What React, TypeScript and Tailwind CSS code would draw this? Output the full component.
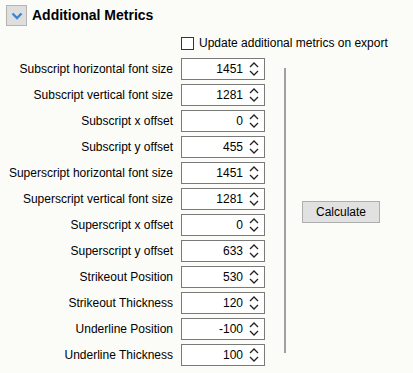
const rows: [string, string][] = [
  ['Subscript horizontal font size', '1451'],
  ['Subscript vertical font size', '1281'],
  ['Subscript x offset', '0'],
  ['Subscript y offset', '455'],
  ['Superscript horizontal font size', '1451'],
  ['Superscript vertical font size', '1281'],
  ['Superscript x offset', '0'],
  ['Superscript y offset', '633'],
  ['Strikeout Position', '530'],
  ['Strikeout Thickness', '120'],
  ['Underline Position', '-100'],
  ['Underline Thickness', '100'],
];

function SpinBox({ value }: { value: string }) {
  return (
    <div className="flex h-[22px] w-[84px] items-center border border-[#7a7a7a] bg-white pr-[3px]">
      <span className="flex-1 text-right text-[12px] text-black">{value}</span>
      <svg width="14" height="16" viewBox="0 0 14 16" className="ml-[4px]">
        <path d="M3 6 L7 2 L11 6" fill="none" stroke="#222" strokeWidth="1.3" />
        <path d="M3 10 L7 14 L11 10" fill="none" stroke="#222" strokeWidth="1.3" />
      </svg>
    </div>
  );
}

export default function App() {
  return (
    <div
      className="h-[373px] w-[413px] bg-[#fbfcf8] text-black"
      style={{ fontFamily: '"Liberation Sans", Arial, sans-serif' }}
    >
      <div className="flex items-center gap-[5px] pl-[6px] pt-[5px]">
        <div className="flex h-[21px] w-[21px] items-center justify-center border border-[#b4b4b4] bg-[#dedede]">
          <svg width="12" height="8" viewBox="0 0 12 8">
            <path d="M1.5 1.5 L6 6 L10.5 1.5" fill="none" stroke="#3b86d0" strokeWidth="2.4" />
          </svg>
        </div>
        <span className="text-[14px] font-bold">Additional Metrics</span>
      </div>

      <label className="ml-[181px] mt-[8px] flex items-center gap-[5px]">
        <span className="h-[13px] w-[13px] border border-[#333] bg-white" />
        <span className="text-[12px]">Update additional metrics on export</span>
      </label>

      <div className="mt-[6px] flex">
        <div className="flex flex-col gap-[4px]">
          {rows.map(([label, value]) => (
            <div key={label} className="flex items-center">
              <span className="w-[173px] text-right text-[12px]">{label}</span>
              <div className="ml-[8px]">
                <SpinBox value={value} />
              </div>
            </div>
          ))}
        </div>
        <div className="ml-[19px] mt-[10px] h-[285px] w-[2px] bg-[#a0a0a0]" />
        <div className="ml-[16px] flex items-center">
          <button className="h-[22px] w-[78px] border border-[#adadad] bg-[#e1e1e1] text-[12px]">
            Calculate
          </button>
        </div>
      </div>
    </div>
  );
}
